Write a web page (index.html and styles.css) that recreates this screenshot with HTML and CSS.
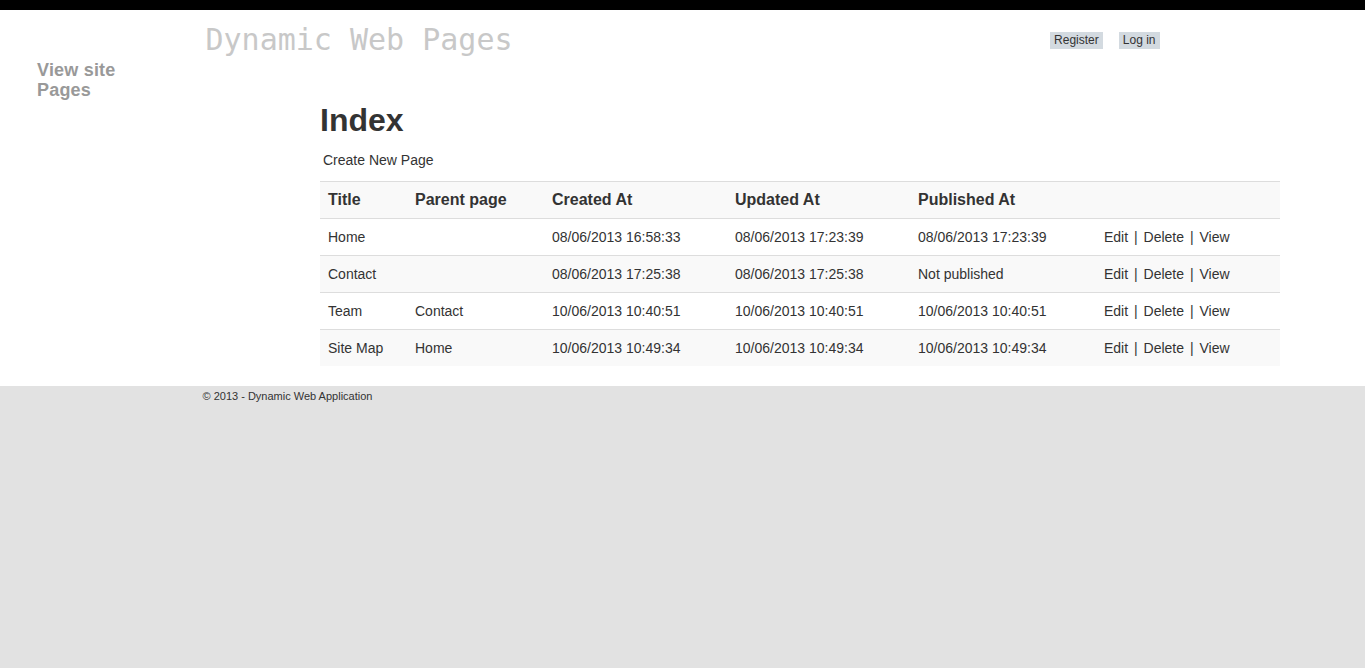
FILE: index.html
```html
<!DOCTYPE html>
<html>
<head>
<meta charset="utf-8">
<title>Index</title>
<link rel="stylesheet" href="styles.css">
</head>
<body>
<div class="topbar"></div>
<div class="page">
  <header class="site-header">
    <div class="site-title">Dynamic Web Pages</div>
    <nav class="login">
      <a class="btn" href="#">Register</a>
      <a class="btn" href="#">Log in</a>
    </nav>
  </header>
  <div class="layout">
    <aside class="sidebar">
      <a href="#" class="side-link">View site<br>Pages</a>
    </aside>
    <main class="main">
      <h1>Index</h1>
      <p class="create"><a href="#">Create New Page</a></p>
      <table class="grid">
        <thead>
          <tr>
            <th class="c1">Title</th>
            <th class="c2">Parent page</th>
            <th class="c3">Created At</th>
            <th class="c4">Updated At</th>
            <th class="c5">Published At</th>
            <th class="c6"></th>
          </tr>
        </thead>
        <tbody>
          <tr>
            <td>Home</td><td></td><td>08/06/2013 16:58:33</td><td>08/06/2013 17:23:39</td><td>08/06/2013 17:23:39</td>
            <td><a href="#">Edit</a> <span class="sep">|</span> <a href="#">Delete</a> <span class="sep">|</span> <a href="#">View</a></td>
          </tr>
          <tr>
            <td>Contact</td><td></td><td>08/06/2013 17:25:38</td><td>08/06/2013 17:25:38</td><td>Not published</td>
            <td><a href="#">Edit</a> <span class="sep">|</span> <a href="#">Delete</a> <span class="sep">|</span> <a href="#">View</a></td>
          </tr>
          <tr>
            <td>Team</td><td>Contact</td><td>10/06/2013 10:40:51</td><td>10/06/2013 10:40:51</td><td>10/06/2013 10:40:51</td>
            <td><a href="#">Edit</a> <span class="sep">|</span> <a href="#">Delete</a> <span class="sep">|</span> <a href="#">View</a></td>
          </tr>
          <tr>
            <td>Site Map</td><td>Home</td><td>10/06/2013 10:49:34</td><td>10/06/2013 10:49:34</td><td>10/06/2013 10:49:34</td>
            <td><a href="#">Edit</a> <span class="sep">|</span> <a href="#">Delete</a> <span class="sep">|</span> <a href="#">View</a></td>
          </tr>
        </tbody>
      </table>
    </main>
  </div>
</div>
<footer class="footer">
  <div class="footer-inner">&copy; 2013 - Dynamic Web Application</div>
</footer>
</body>
</html>
```
FILE: styles.css
```css
html, body {
  margin: 0;
  padding: 0;
}
body {
  font-family: "Liberation Sans", Arial, sans-serif;
  color: #333;
  background: #e2e2e2;
  min-height: 100vh;
}
a {
  color: #333;
  text-decoration: none;
}
.topbar {
  height: 10px;
  background: #000;
}
.page {
  background: #fff;
  padding-bottom: 20px;
}
.site-header {
  width: 960px;
  margin: 0 auto;
  display: flex;
  justify-content: space-between;
  align-items: flex-start;
  height: 50px;
}
.site-title {
  font-family: "DejaVu Sans Mono", "Liberation Mono", monospace;
  font-size: 30px;
  color: #c8c8c8;
  padding-left: 3px;
  margin-top: 12px;
  line-height: 36px;
}
.login {
  display: flex;
  gap: 16px;
  margin-top: 22px;
  margin-right: 3px;
}
.btn {
  display: block;
  background: #d3dae0;
  color: #333;
  font-size: 12px;
  line-height: 17px;
  padding: 0 4px;
}
.layout {
  display: flex;
}
.sidebar {
  width: 320px;
  padding-left: 37px;
  box-sizing: border-box;
  flex: none;
}
.side-link {
  display: block;
  color: #999;
  font-weight: bold;
  font-size: 18px;
  line-height: 20px;
  letter-spacing: 0.2px;
}
.main {
  width: 960px;
  flex: none;
}
h1 {
  font-size: 32px;
  font-weight: bold;
  margin: 42px 0 0 0;
  line-height: 36px;
  color: #333;
}
.create {
  margin: 13px 0 12px 3px;
  font-size: 14px;
  line-height: 18px;
}
.grid {
  width: 960px;
  border-collapse: collapse;
  font-size: 14px;
}
.grid th, .grid td {
  text-align: left;
  padding: 0 8px;
  height: 36px;
  border-top: 1px solid #ddd;
  vertical-align: middle;
}
.grid th {
  font-size: 16px;
  font-weight: bold;
}
.grid thead tr {
  background: #f9f9f9;
}
.grid tbody tr:nth-child(even) {
  background: #f9f9f9;
}
.c1 { width: 71px; }
.c2 { width: 121px; }
.c3 { width: 167px; }
.c4 { width: 167px; }
.c5 { width: 170px; }
.sep {
  margin: 0 2px;
}
.footer {
  background: #e2e2e2;
}
.footer-inner {
  width: 960px;
  margin: 0 auto;
  font-size: 11px;
  padding-top: 4px;
  color: #333;
}
```
